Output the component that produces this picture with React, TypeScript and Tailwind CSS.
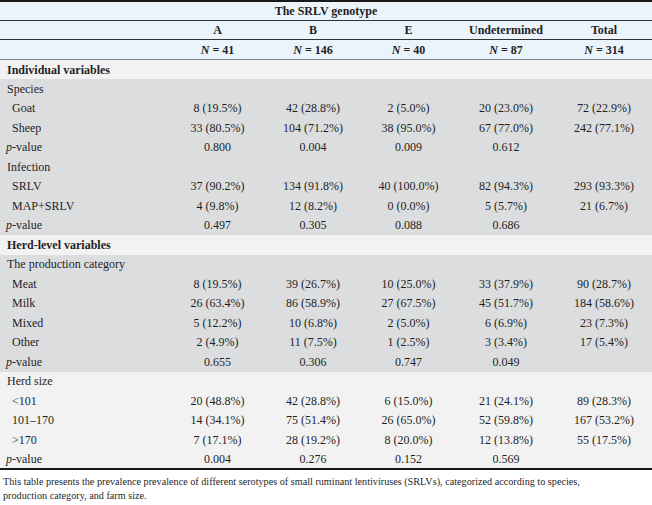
const cols = ["A", "B", "E", "Undetermined", "Total"];
const ns = ["41", "146", "40", "87", "314"];

type Row =
  | { kind: "section"; label: string; bg: string }
  | { kind: "group"; label: string; bg: string }
  | { kind: "data"; label: string; vals: string[]; bg: string; italicP?: boolean; sub?: boolean };

const G = "bg-[#dcdddf]";
const L = "bg-[#f2f2f2]";

const rows: Row[] = [
  { kind: "section", label: "Individual variables", bg: L },
  { kind: "group", label: "Species", bg: G },
  { kind: "data", label: "Goat", vals: ["8 (19.5%)", "42 (28.8%)", "2 (5.0%)", "20 (23.0%)", "72 (22.9%)"], bg: G, sub: true },
  { kind: "data", label: "Sheep", vals: ["33 (80.5%)", "104 (71.2%)", "38 (95.0%)", "67 (77.0%)", "242 (77.1%)"], bg: G, sub: true },
  { kind: "data", label: "-value", vals: ["0.800", "0.004", "0.009", "0.612", ""], bg: G, italicP: true },
  { kind: "group", label: "Infection", bg: G },
  { kind: "data", label: "SRLV", vals: ["37 (90.2%)", "134 (91.8%)", "40 (100.0%)", "82 (94.3%)", "293 (93.3%)"], bg: G, sub: true },
  { kind: "data", label: "MAP+SRLV", vals: ["4 (9.8%)", "12 (8.2%)", "0 (0.0%)", "5 (5.7%)", "21 (6.7%)"], bg: G, sub: true },
  { kind: "data", label: "-value", vals: ["0.497", "0.305", "0.088", "0.686", ""], bg: G, italicP: true },
  { kind: "section", label: "Herd-level variables", bg: L },
  { kind: "group", label: "The production category", bg: G },
  { kind: "data", label: "Meat", vals: ["8 (19.5%)", "39 (26.7%)", "10 (25.0%)", "33 (37.9%)", "90 (28.7%)"], bg: G, sub: true },
  { kind: "data", label: "Milk", vals: ["26 (63.4%)", "86 (58.9%)", "27 (67.5%)", "45 (51.7%)", "184 (58.6%)"], bg: G, sub: true },
  { kind: "data", label: "Mixed", vals: ["5 (12.2%)", "10 (6.8%)", "2 (5.0%)", "6 (6.9%)", "23 (7.3%)"], bg: G, sub: true },
  { kind: "data", label: "Other", vals: ["2 (4.9%)", "11 (7.5%)", "1 (2.5%)", "3 (3.4%)", "17 (5.4%)"], bg: G, sub: true },
  { kind: "data", label: "-value", vals: ["0.655", "0.306", "0.747", "0.049", ""], bg: G, italicP: true },
  { kind: "group", label: "Herd size", bg: L },
  { kind: "data", label: "<101", vals: ["20 (48.8%)", "42 (28.8%)", "6 (15.0%)", "21 (24.1%)", "89 (28.3%)"], bg: L, sub: true },
  { kind: "data", label: "101–170", vals: ["14 (34.1%)", "75 (51.4%)", "26 (65.0%)", "52 (59.8%)", "167 (53.2%)"], bg: L, sub: true },
  { kind: "data", label: ">170", vals: ["7 (17.1%)", "28 (19.2%)", "8 (20.0%)", "12 (13.8%)", "55 (17.5%)"], bg: L, sub: true },
  { kind: "data", label: "-value", vals: ["0.004", "0.276", "0.152", "0.569", ""], bg: L, italicP: true },
];

const widths = ["w-[170px]", "w-[95px]", "w-[96px]", "w-[95px]", "w-[100px]", "w-[96px]"];

export default function App() {
  return (
    <div className="w-[652px] h-[505px] bg-white font-[family-name:'Liberation_Serif',serif] text-[#1f1f1f] overflow-hidden">
      <table className="w-full border-collapse table-fixed text-[12px] leading-none border-t-2 border-b-2 border-[#1a1a1a]">
        <colgroup>
          {widths.map((w, i) => (
            <col key={i} className={w} />
          ))}
        </colgroup>
        <thead className="bg-[#ebf3fb]">
          <tr className="h-[19px] border-b border-[#333]">
            <th colSpan={6} className="text-center font-bold">The SRLV genotype</th>
          </tr>
          <tr className="h-[19.5px] border-b border-[#333]">
            <th />
            {cols.map((c) => (
              <th key={c} className="text-center font-bold">{c}</th>
            ))}
          </tr>
          <tr className="h-[20px] border-b border-[#888]">
            <th />
            {ns.map((n) => (
              <th key={n} className="text-center font-bold">
                <i>N</i> = {n}
              </th>
            ))}
          </tr>
        </thead>
        <tbody>
          {rows.map((r, i) => {
            if (r.kind === "section") {
              return (
                <tr key={i} className={`h-[19.5px] ${r.bg}`}>
                  <td colSpan={6} className="pl-[7px] font-bold">{r.label}</td>
                </tr>
              );
            }
            if (r.kind === "group") {
              return (
                <tr key={i} className={`h-[19.5px] ${r.bg}`}>
                  <td colSpan={6} className="pl-[7px]">{r.label}</td>
                </tr>
              );
            }
            return (
              <tr key={i} className={`h-[19.5px] ${r.bg}`}>
                <td className={r.sub ? "pl-[12px]" : "pl-[6px]"}>
                  {r.italicP ? (
                    <>
                      <i>p</i>
                      {r.label}
                    </>
                  ) : (
                    r.label
                  )}
                </td>
                {r.vals.map((v, j) => (
                  <td key={j} className="text-center">{v}</td>
                ))}
              </tr>
            );
          })}
        </tbody>
      </table>
      <p className="w-[610px] px-[3px] pt-[5px] text-[10.2px] leading-[14px]">
        This table presents the prevalence prevalence of different serotypes of small ruminant lentiviruses (SRLVs), categorized according to species, production category, and farm size.
      </p>
    </div>
  );
}
